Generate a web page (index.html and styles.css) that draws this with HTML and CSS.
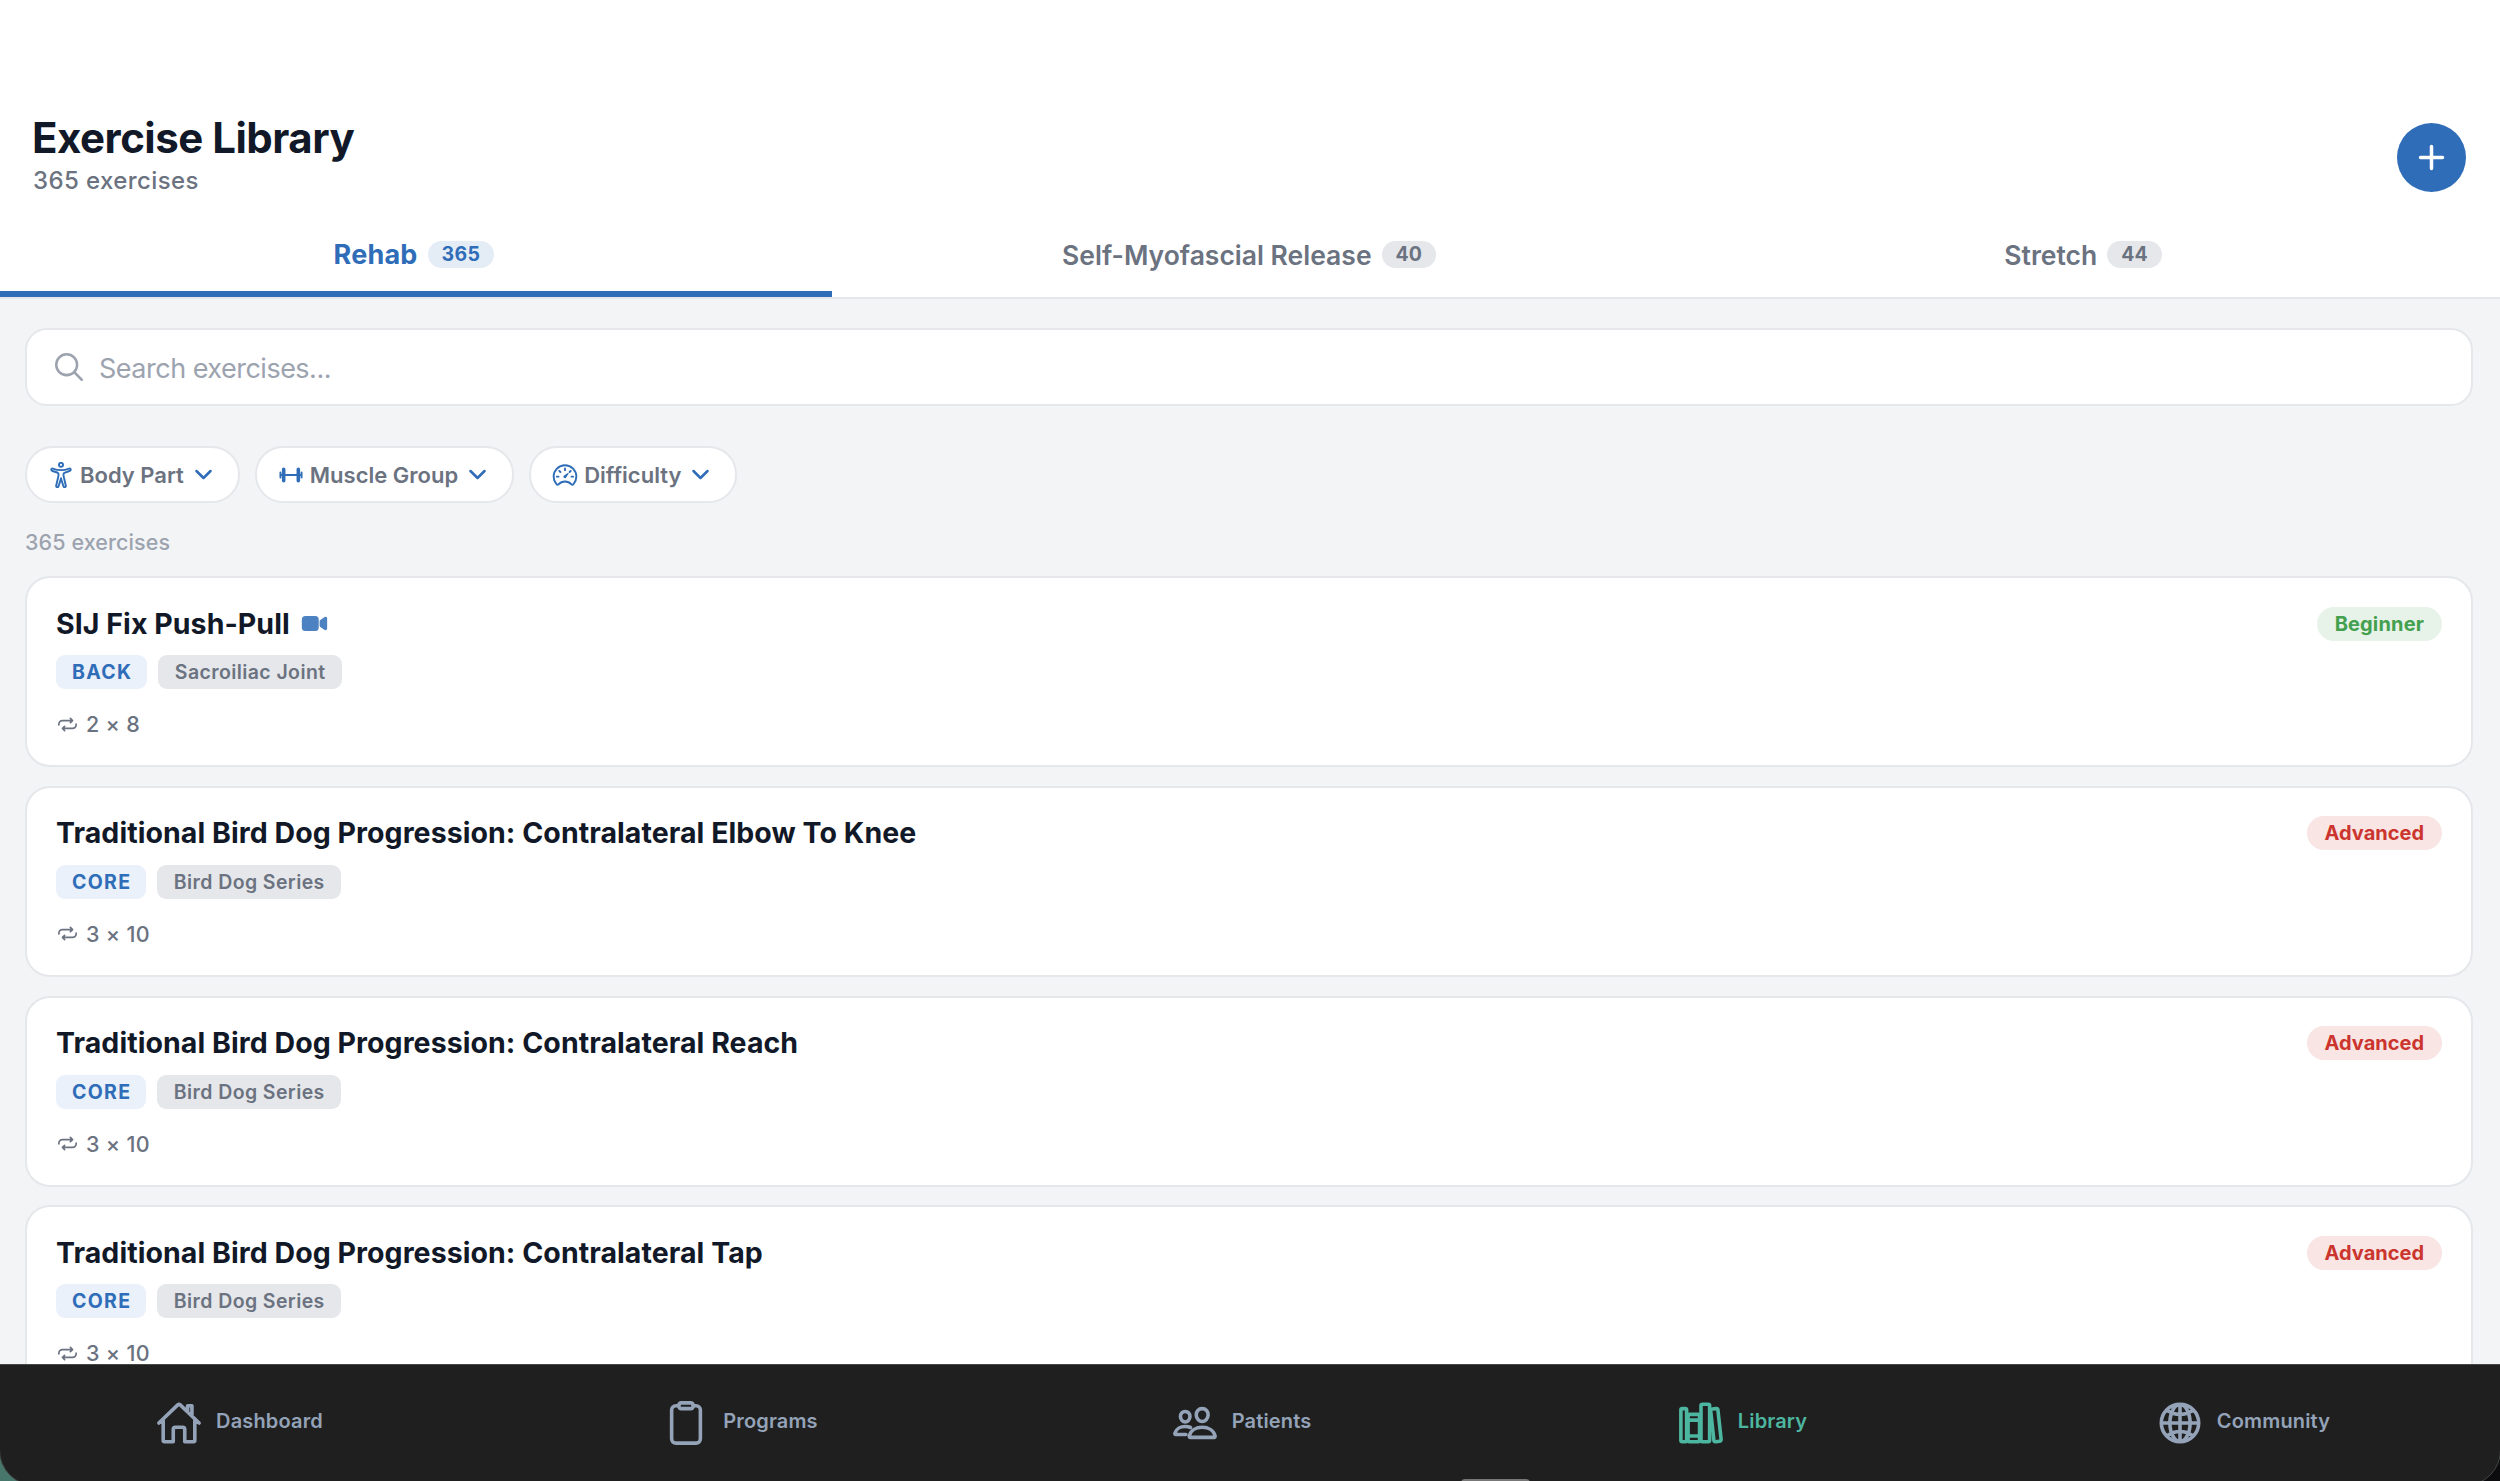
FILE: index.html
```html
<!DOCTYPE html>
<html lang="en">
<head>
    <meta charset="UTF-8">
    <meta name="viewport" content="width=device-width, initial-scale=1.0">
    <title>Exercise Library</title>
    <link rel="stylesheet" href="styles.css">
</head>
<body>

    <!-- Shared icon shapes -->
    <svg class="sprite" xmlns="http://www.w3.org/2000/svg">
        <symbol id="repeat" viewBox="0 0 512 512">
            <path d="M320 120l48 48-48 48M352 168H144a80.24 80.24 0 00-80 80v16M192 392l-48-48 48-48M160 344h208a80.24 80.24 0 0080-80v-16"/>
        </symbol>
        <symbol id="chevron" viewBox="0 0 512 512">
            <path d="M112 184l144 144 144-144" stroke-width="52"/>
        </symbol>
    </svg>

    <header class="header">
        <div class="title-row">
            <div>
                <h1>Exercise Library</h1>
                <p class="subtitle">365 exercises</p>
            </div>
            <button class="add-btn" aria-label="Add exercise">
                <svg class="icon" viewBox="0 0 512 512"><path d="M256 112v288M400 256H112"/></svg>
            </button>
        </div>
        <nav class="tabs">
            <a class="tab active"><span class="tab-name">Rehab</span><span class="count">365</span></a>
            <a class="tab"><span class="tab-name">Self-Myofascial Release</span><span class="count">40</span></a>
            <a class="tab"><span class="tab-name">Stretch</span><span class="count">44</span></a>
        </nav>
    </header>

    <main class="content">
        <div class="search">
            <svg class="icon" viewBox="0 0 512 512"><path d="M221.09 64a157.09 157.09 0 10157.09 157.09A157.1 157.1 0 00221.09 64zM338.29 338.29L448 448"/></svg>
            <span>Search exercises...</span>
        </div>

        <div class="filters">
            <button class="filter">
                <svg class="icon" viewBox="0 0 512 512"><circle cx="256" cy="56" r="40"/><path d="M204.23 274.44c2.9-18.06 4.2-35.52-.5-47.59-4-10.38-12.7-16.19-23.2-20.15L88 176.76c-12-4-23.21-10.7-24-23.94-1-17 14-28 29-24 0 0 88 31.14 163 31.14s162-31 162-31c18-5 30 9 30 23.79 0 14.21-11 19.21-24 23.94l-88 31.91c-8 3-21 9-26 18.18-6 10.75-5 29.53-2.1 47.59l5.9 29.63 37.41 163.9c2.8 13.15-6.3 25.44-19.4 27.74S308 489 304.12 476.28l-37.56-115.93q-2.71-8.34-4.8-16.87L256 320l-5.3 21.65q-2.52 10.35-5.8 20.48L208 476.18c-4 12.85-14.5 21.75-27.6 19.46s-22.4-15.59-19.46-27.74l37.39-163.83z"/></svg>
                <span>Body Part</span>
                <svg class="icon chevron"><use href="#chevron"/></svg>
            </button>
            <button class="filter">
                <svg class="icon" viewBox="0 0 512 512"><path d="M48 256h416M48 208v96M464 208v96"/><rect x="384" y="128" width="32" height="256" rx="16"/><rect x="96" y="128" width="32" height="256" rx="16"/></svg>
                <span>Muscle Group</span>
                <svg class="icon chevron"><use href="#chevron"/></svg>
            </button>
            <button class="filter">
                <svg class="icon" viewBox="0 0 512 512"><path class="solid" d="M326.1 231.9l-47.5 75.5a31 31 0 01-7 7 30.11 30.11 0 01-35-49l75.5-47.5a10.23 10.23 0 0111.7 0 10.06 10.06 0 012.3 14z"/><path d="M256 64C132.3 64 32 164.2 32 287.9a223.18 223.18 0 0056.3 148.5c1.1 1.2 2.1 2.4 3.2 3.5a25.19 25.19 0 0037.1-.1 173.13 173.13 0 01254.8 0 25.19 25.19 0 0037.1.1l3.2-3.5A223.18 223.18 0 00480 287.9C480 164.2 379.7 64 256 64zM256 128v32M416 288h-32M128 288H96M165.49 197.49l-22.63-22.63M346.51 197.49l22.63-22.63"/></svg>
                <span>Difficulty</span>
                <svg class="icon chevron"><use href="#chevron"/></svg>
            </button>
        </div>

        <p class="result-count">365 exercises</p>

        <div class="card">
            <div class="card-top">
                <h2>SIJ Fix Push-Pull</h2>
                <svg class="video" viewBox="0 0 512 512"><path d="M464 384.39a32 32 0 01-13-2.77 15.77 15.77 0 01-2.71-1.54l-82.71-58.22A32 32 0 01352 295.7v-79.4a32 32 0 0113.58-26.16l82.71-58.22a15.77 15.77 0 012.71-1.54 32 32 0 0145 29.24v192.76a32 32 0 01-32 32zM268 400H84a68.07 68.07 0 01-68-68V180a68.07 68.07 0 0168-68h184.48A67.6 67.6 0 01336 179.52V332a68.07 68.07 0 01-68 68z"/></svg>
                <span class="level beginner">Beginner</span>
            </div>
            <div class="tags"><span class="tag region">BACK</span><span class="tag">Sacroiliac Joint</span></div>
            <div class="sets"><svg class="icon"><use href="#repeat"/></svg><span>2 × 8</span></div>
        </div>

        <div class="card">
            <div class="card-top">
                <h2>Traditional Bird Dog Progression: Contralateral Elbow To Knee</h2>
                <span class="level advanced">Advanced</span>
            </div>
            <div class="tags"><span class="tag region">CORE</span><span class="tag">Bird Dog Series</span></div>
            <div class="sets"><svg class="icon"><use href="#repeat"/></svg><span>3 × 10</span></div>
        </div>

        <div class="card">
            <div class="card-top">
                <h2>Traditional Bird Dog Progression: Contralateral Reach</h2>
                <span class="level advanced">Advanced</span>
            </div>
            <div class="tags"><span class="tag region">CORE</span><span class="tag">Bird Dog Series</span></div>
            <div class="sets"><svg class="icon"><use href="#repeat"/></svg><span>3 × 10</span></div>
        </div>

        <div class="card">
            <div class="card-top">
                <h2>Traditional Bird Dog Progression: Contralateral Tap</h2>
                <span class="level advanced">Advanced</span>
            </div>
            <div class="tags"><span class="tag region">CORE</span><span class="tag">Bird Dog Series</span></div>
            <div class="sets"><svg class="icon"><use href="#repeat"/></svg><span>3 × 10</span></div>
        </div>
    </main>

    <div class="dock">
        <nav class="bottom-nav">
            <a class="nav-item">
                <svg class="icon" viewBox="0 0 512 512"><path d="M80 212v236a16 16 0 0016 16h96V328a24 24 0 0124-24h80a24 24 0 0124 24v136h96a16 16 0 0016-16V212M480 256L266.89 52c-5-5.28-16.69-5.34-21.78 0L32 256M400 179V64h-48v69"/></svg>
                <span>Dashboard</span>
            </a>
            <a class="nav-item">
                <svg class="icon" viewBox="0 0 512 512"><path d="M336 64h32a48 48 0 0148 48v320a48 48 0 01-48 48H144a48 48 0 01-48-48V112a48 48 0 0148-48h32"/><rect x="176" y="32" width="160" height="64" rx="26.13"/></svg>
                <span>Programs</span>
            </a>
            <a class="nav-item">
                <svg class="icon" viewBox="0 0 512 512"><path d="M402 168c-2.93 40.67-33.1 72-66 72s-63.12-31.32-66-72c-3-42.31 26.37-72 66-72s69 30.46 66 72zM336 304c-65.17 0-127.84 32.37-143.54 95.41-2.08 8.34 3.15 16.59 11.72 16.59h263.65c8.57 0 13.77-8.25 11.72-16.59C463.85 335.36 401.18 304 336 304zM200 185.94c-2.34 32.48-26.72 58.06-53 58.06s-50.7-25.57-53-58.06C91.61 152.15 115.34 128 147 128s55.39 24.77 53 57.94zM206 306c-18.05-8.27-37.93-11.45-59-11.45-52 0-102.1 25.85-114.65 76.2-1.65 6.66 2.53 13.25 9.37 13.25H154"/></svg>
                <span>Patients</span>
            </a>
            <a class="nav-item current">
                <svg class="icon" viewBox="0 0 512 512"><rect x="32" y="96" width="64" height="368" rx="16"/><path d="M112 224h128M112 400h128"/><rect x="112" y="160" width="128" height="304" rx="16"/><rect x="256" y="48" width="96" height="416" rx="16"/><path d="M422.46 96.11l-40.4 4.25c-11.12 1.17-19.18 11.57-17.93 23.1l34.92 321.59c1.26 11.53 11.37 20 22.49 18.84l40.4-4.25c11.12-1.17 19.18-11.57 17.93-23.1L445 115c-1.31-11.58-11.42-20.06-22.54-18.89z"/></svg>
                <span>Library</span>
            </a>
            <a class="nav-item">
                <svg class="icon" viewBox="0 0 512 512"><path d="M256 48C141.13 48 48 141.13 48 256s93.13 208 208 208 208-93.13 208-208S370.87 48 256 48zM256 48c-58.07 0-112.67 93.13-112.67 208S197.93 464 256 464s112.67-93.13 112.67-208S314.07 48 256 48zM117.33 117.33c38.24 27.15 86.38 43.34 138.67 43.34s100.43-16.19 138.67-43.34M394.67 394.67c-38.24-27.15-86.38-43.34-138.67-43.34s-100.43 16.19-138.67 43.34M256 48v416M464 256H48"/></svg>
                <span>Community</span>
            </a>
        </nav>
        <div class="handle"></div>
    </div>

</body>
</html>
```
FILE: styles.css
```css
/* General Styling */
* {
    margin: 0;
    padding: 0;
    box-sizing: border-box;
}
html, body {
    width: 100%;
    height: 100%;
    overflow: hidden;
}
body {
    font-family: 'Inter', 'Liberation Sans', sans-serif;
    background: #f3f4f6;
    color: #111827;
    display: flex;
    flex-direction: column;
}
button {
    font-family: inherit;
    border: none;
    cursor: pointer;
}
.sprite {
    display: none;
}
.icon {
    fill: none;
    stroke: currentColor;
    stroke-width: 38;
    stroke-linecap: round;
    stroke-linejoin: round;
    flex-shrink: 0;
}
.icon .solid {
    fill: currentColor;
    stroke: none;
}
/* Header */
.header {
    height: 299px;
    flex-shrink: 0;
    display: flex;
    flex-direction: column;
    justify-content: space-between;
    background: white;
    border-bottom: 2px solid #e5e7eb;
}
.title-row {
    display: flex;
    justify-content: space-between;
    align-items: center;
    padding: 114px 34px 0 32px;
}
h1 {
    font-size: 42px;
    font-weight: 700;
    line-height: 48px;
    letter-spacing: -0.5px;
}
.subtitle {
    font-size: 24px;
    font-weight: 500;
    line-height: 30px;
    letter-spacing: 0.4px;
    margin: 4px 0 1px 1px;
    color: #6b7280;
}
.add-btn {
    width: 69px;
    height: 69px;
    border-radius: 50%;
    background: #2f6db8;
    color: white;
    display: flex;
    align-items: center;
    justify-content: center;
    margin-top: 4px;
}
.add-btn .icon {
    width: 39px;
    height: 39px;
    stroke-width: 46;
}
/* Tabs */
.tabs {
    display: grid;
    grid-template-columns: 832px 1fr 834px;
}
.tab {
    height: 85px;
    display: flex;
    align-items: center;
    justify-content: center;
    gap: 10px;
    padding-top: 6px;
    color: #6b7280;
    border-bottom: 6px solid transparent;
}
.tab-name {
    font-size: 26.5px;
    font-weight: 600;
}
.count {
    font-size: 19.5px;
    font-weight: 700;
    line-height: 27px;
    padding: 0 14px;
    border-radius: 14px;
    background: #e5e7eb;
}
.tab.active {
    padding-right: 4px;
    color: #2f6db8;
    border-color: #2f6db8;
}
.active .tab-name {
    font-size: 27px;
    font-weight: 700;
    letter-spacing: 0.2px;
}
.active .count {
    letter-spacing: 0.4px;
    background: #e4ecf6;
}
/* Search and filters */
.content {
    flex: 1;
    min-height: 0;
    overflow: hidden;
    padding: 29px 27px 0 25px;
}
.search {
    height: 78px;
    display: flex;
    align-items: center;
    gap: 13px;
    padding-left: 25px;
    background: white;
    border: 2px solid #e5e7eb;
    border-radius: 22px;
    font-size: 27px;
    letter-spacing: -0.5px;
    color: #9ca3af;
}
.search .icon {
    width: 34px;
    height: 34px;
}
.search span {
    margin-top: 2px;
}
.filters {
    display: flex;
    gap: 15px;
    margin-top: 40px;
}
.filter {
    height: 57px;
    display: flex;
    align-items: center;
    padding: 0 22px 0 21px;
    background: white;
    border: 2px solid #e5e7eb;
    border-radius: 28px;
    font-size: 22px;
    font-weight: 600;
    color: #2f6db8;
}
.filter .icon {
    width: 26px;
    height: 26px;
}
.filter span {
    color: #6b7280;
    margin: 0 7px 0 6px;
}
.filter .chevron {
    width: 25px;
    height: 25px;
}
.result-count {
    font-size: 21.5px;
    font-weight: 500;
    line-height: 28px;
    letter-spacing: 0.1px;
    color: #9ca3af;
    margin: 25px 0 20px;
}
/* Exercise cards */
.card {
    height: 191px;
    padding: 27px 29px;
    background: white;
    border: 2px solid #e5e7eb;
    border-radius: 25px;
    margin-bottom: 18.8px;
}
.card-top {
    display: flex;
    align-items: center;
    height: 36px;
}
h2 {
    font-size: 28.5px;
    font-weight: 700;
    letter-spacing: 0.06px;
}
.video {
    width: 27px;
    height: 27px;
    margin-left: 11px;
    fill: #2f6db8;
    opacity: 0.85;
}
.level {
    margin: 1px 0 0 auto;
    font-size: 20px;
    font-weight: 700;
    line-height: 34px;
    padding: 0 18px;
    border-radius: 17px;
}
.beginner {
    letter-spacing: 0.15px;
    color: #43a04e;
    background: #e7f2e8;
}
.advanced {
    color: #cb352e;
    background: #f8e5e4;
}
.tags {
    display: flex;
    gap: 11px;
    margin-top: 14px;
}
.tag {
    font-size: 19.5px;
    font-weight: 600;
    line-height: 34px;
    letter-spacing: 0.4px;
    padding: 0 16.5px;
    border-radius: 9px;
    color: #6b7280;
    background: #e5e7eb;
}
.region {
    font-weight: 700;
    letter-spacing: 1.3px;
    padding: 0 15px 0 16px;
    color: #2f6db8;
    background: #eaf1fa;
}
.sets {
    display: flex;
    align-items: center;
    gap: 7px;
    margin-top: 22px;
    height: 26px;
    font-size: 21.5px;
    font-weight: 500;
    line-height: 24px;
    letter-spacing: 0.3px;
    color: #6b7280;
}
.sets .icon {
    width: 23px;
    height: 23px;
}
/* Bottom navigation */
.dock {
    position: relative;
    height: 117px;
    flex-shrink: 0;
    overflow: hidden;
    background: linear-gradient(to right, #47776a 50%, #0c0c0e 50%);
}
.bottom-nav {
    height: 122px;
    display: flex;
    margin: 0 -1px;
    background: #1f1f1f;
    border: 1px solid #444847;
    border-radius: 0 0 36px 36px;
}
.nav-item {
    flex: 1;
    display: flex;
    align-items: center;
    justify-content: center;
    gap: 14px;
    height: 112px;
    font-size: 20px;
    font-weight: 600;
    letter-spacing: 0.15px;
    color: #94a3b8;
}
.nav-item:first-child {
    margin-left: -11px;
}
.nav-item:last-child {
    margin-right: 6px;
}
.nav-item .icon {
    width: 46px;
    height: 46px;
    margin-top: 3px;
    stroke-width: 40;
}
.current {
    color: #4db6a0;
}
/* Drag handle peeking over the bottom edge */
.handle {
    position: absolute;
    left: 1461px;
    bottom: -6px;
    width: 69px;
    height: 8px;
    border-radius: 4px;
    background: #777777;
}
```
